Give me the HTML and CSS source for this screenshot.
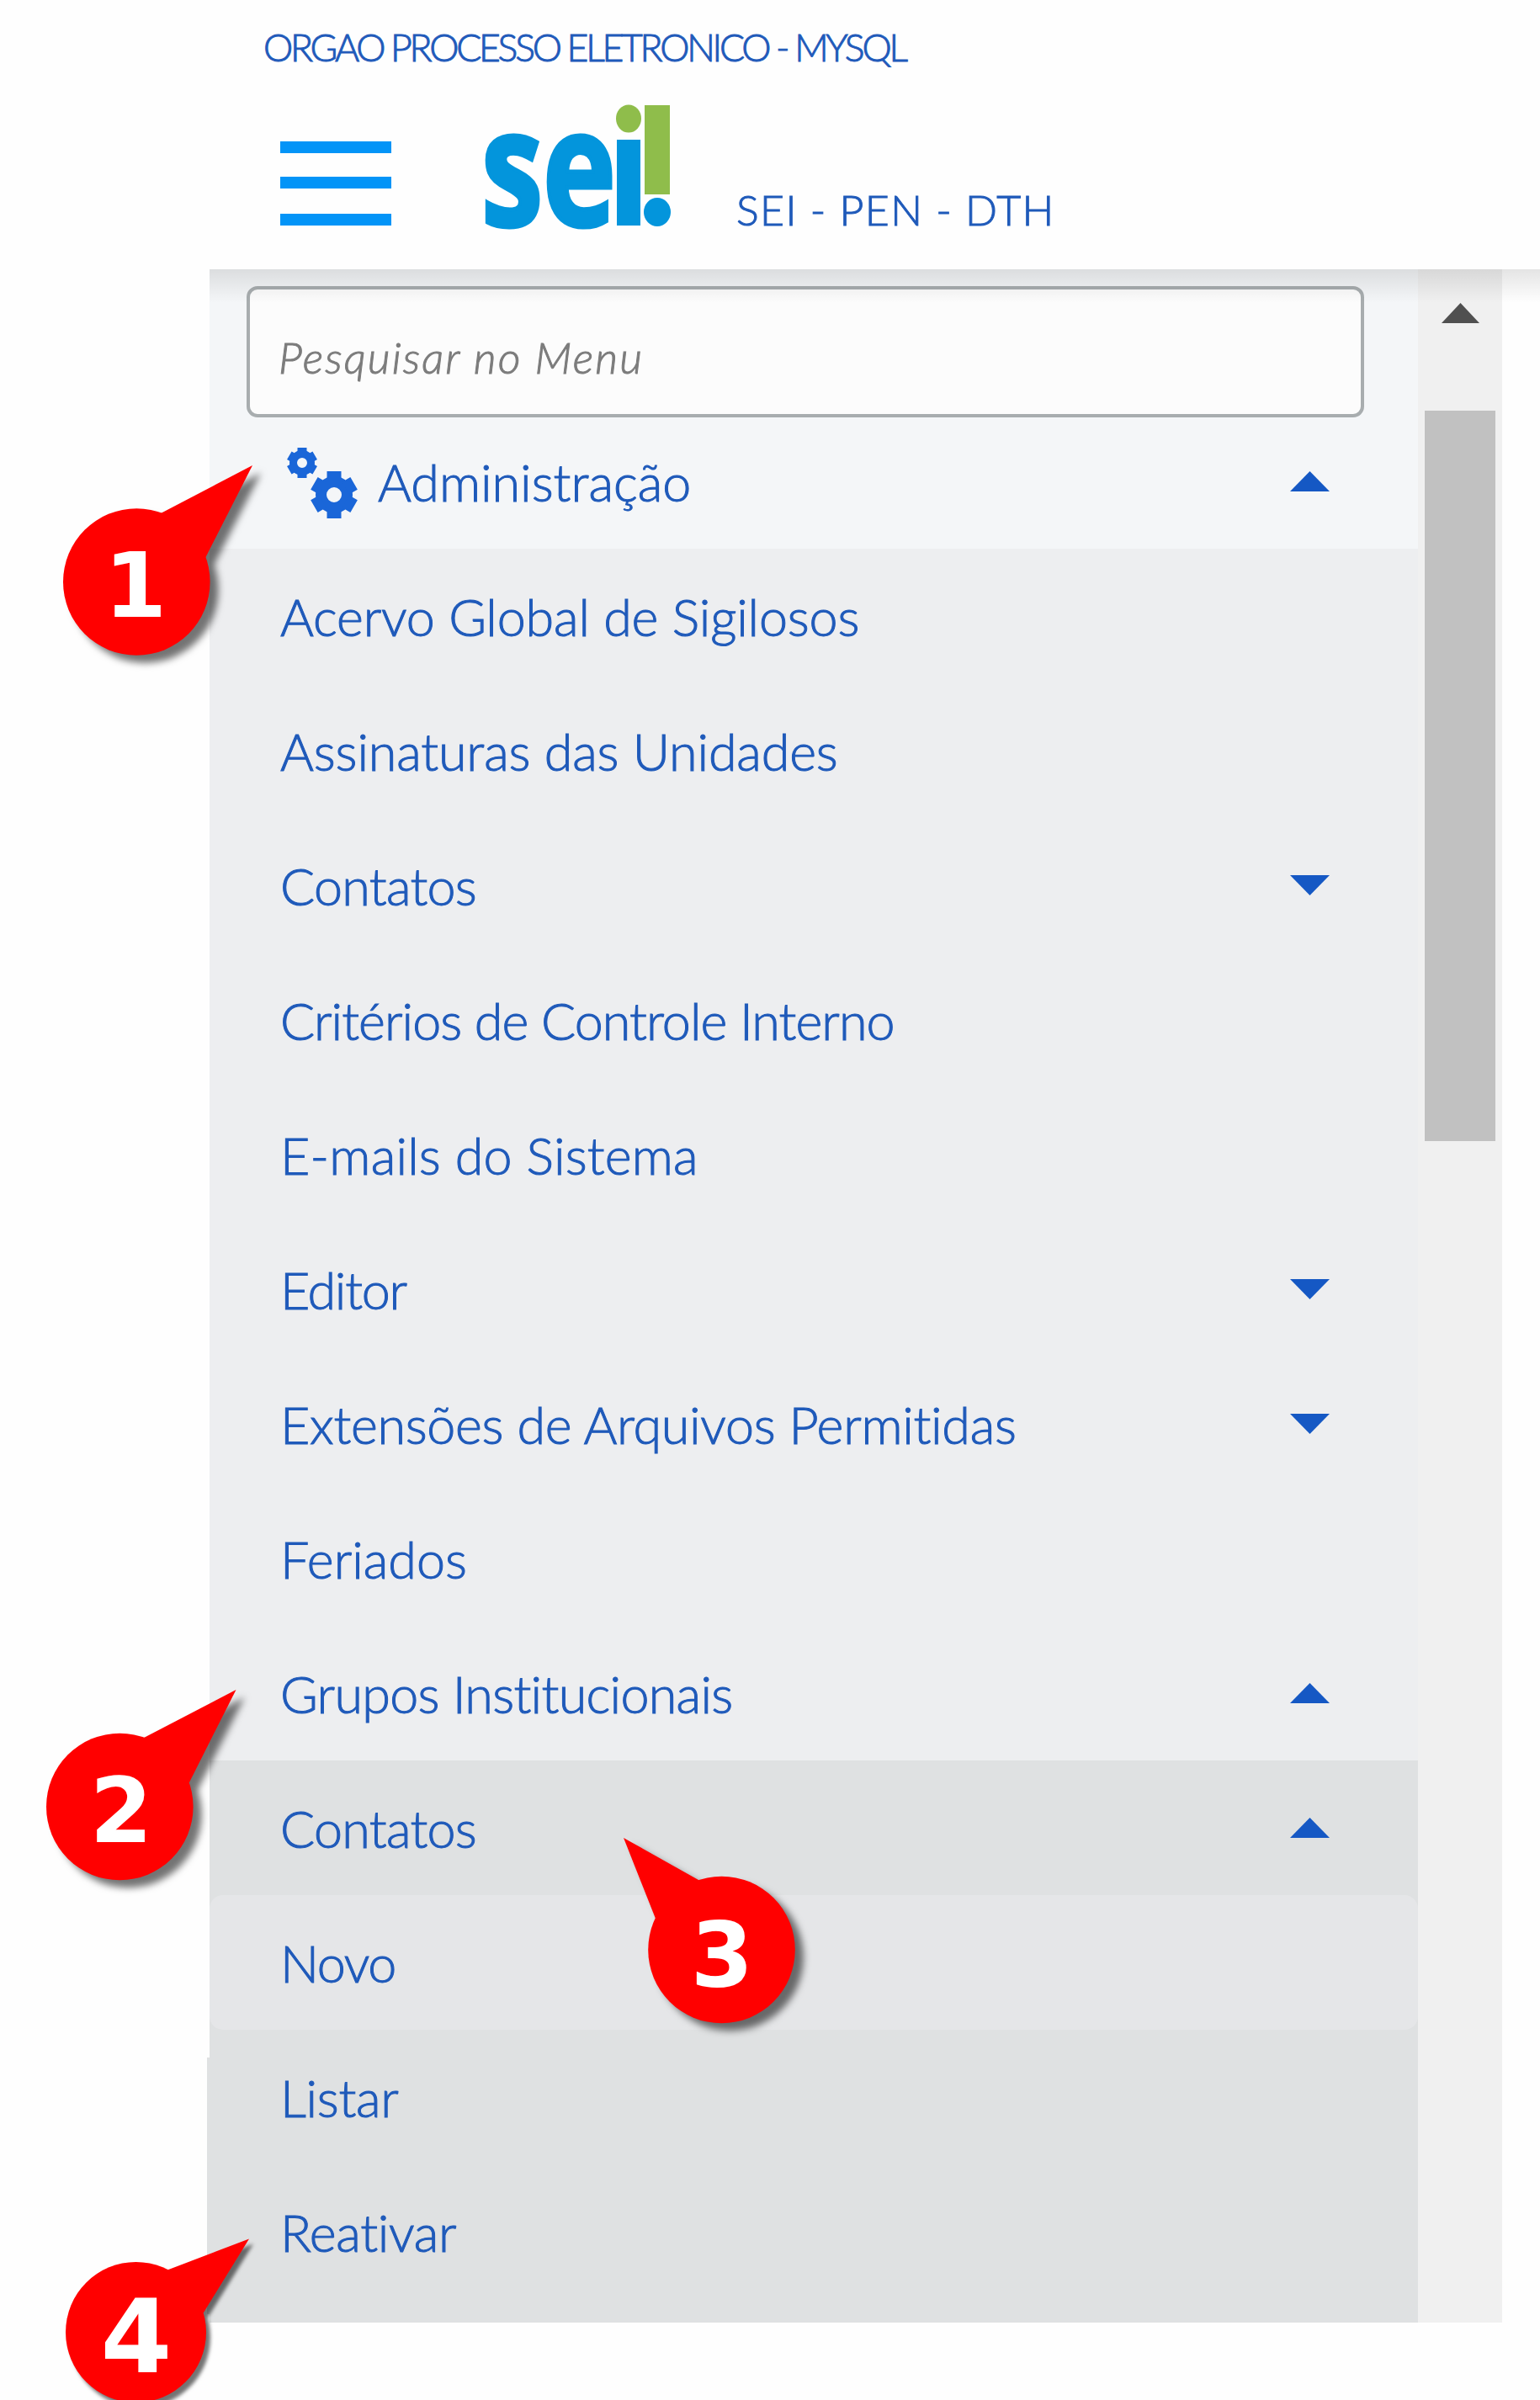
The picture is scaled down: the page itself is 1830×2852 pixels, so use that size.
FILE: index.html
```html
<!DOCTYPE html>
<html lang="pt-BR">
<head>
<meta charset="utf-8">
<title>SEI - PEN - DTH</title>
<link rel="stylesheet" href="styles.css">
</head>
<body>
<div class="page">
  <header class="topbar">
    <div class="org"><span class="t-org">ORGAO PROCESSO ELETRONICO - MYSQL</span></div>
    <div class="brand">
      <svg class="burger" width="132" height="104" viewBox="0 0 132 104" fill="#0394f7"><path d="M0 0h132v14H0zM0 42h132v14H0zM0 86h132v14H0z"/></svg>
      <svg class="logo" width="224" height="150" viewBox="0 0 224 150">
        <g fill="#0395dc">
          <text class="logo-text" x="-3" y="144" textLength="160" lengthAdjust="spacingAndGlyphs">se</text>
          <rect x="158" y="42" width="28" height="102"/>
          <ellipse cx="206" cy="128" rx="16" ry="17"/>
        </g>
        <g fill="#8fbd4b"><ellipse cx="172" cy="17" rx="15" ry="16.5"/><rect x="191" y="1" width="30" height="106"/></g>
      </svg>
      <span class="system"><span class="t-sys">SEI - PEN - DTH</span></span>
    </div>
  </header>

  <div class="body">
    <nav class="sidebar">
      <div class="head">
        <div class="search"><span class="t-search">Pesquisar no Menu</span></div>
        <div class="row row-admin">
          <svg class="gears" width="84" height="86" viewBox="0 0 84 86" fill="none" stroke="#1a66d8">
            <g transform="translate(18 18)"><circle r="10.5" stroke-width="9"/><path stroke-width="11" d="M0-11V-18M0 11V18M9.5-5.5 15.2-8.8M-9.5 5.5-15.2 8.8M9.5 5.5 15.2 8.8M-9.5-5.5-15.2-8.8"/></g>
            <g transform="translate(56 56)"><circle r="15.5" stroke-width="13"/><path stroke-width="17" d="M0-16V-28M0 16V28M13.9-8 23.6-13.6M-13.9 8-23.6 13.6M13.9 8 23.6 13.6M-13.9-8-23.6-13.6"/></g>
          </svg>
          <span class="label t-adm">Administração</span><i class="caret up"></i>
        </div>
      </div>
      <div class="level1">
        <div class="row"><span class="label t1">Acervo Global de Sigilosos</span></div>
        <div class="row"><span class="label t2">Assinaturas das Unidades</span></div>
        <div class="row"><span class="label t3">Contatos</span><i class="caret down"></i></div>
        <div class="row"><span class="label t4">Critérios de Controle Interno</span></div>
        <div class="row"><span class="label t5">E-mails do Sistema</span></div>
        <div class="row"><span class="label t6">Editor</span><i class="caret down"></i></div>
        <div class="row"><span class="label t7">Extensões de Arquivos Permitidas</span><i class="caret down"></i></div>
        <div class="row"><span class="label t8">Feriados</span></div>
        <div class="row"><span class="label t9">Grupos Institucionais</span><i class="caret up"></i></div>
      </div>
      <div class="level2">
        <div class="row"><span class="label t3">Contatos</span><i class="caret up"></i></div>
        <div class="row hover"><span class="label t10">Novo</span></div>
        <div class="row"><span class="label t11">Listar</span></div>
        <div class="row"><span class="label t12">Reativar</span></div>
      </div>
    </nav>
    <div class="scrollbar"><i class="scroll-up"></i><div class="thumb"></div></div>
  </div>

  <svg class="callouts" width="1830" height="2852" viewBox="0 0 1830 2852">
    <g class="pin" fill="#f00">
      <circle cx="162.3" cy="691.5" r="87.3"/><path d="M191 610 300 553 244 663 162 692z"/>
    </g>
    <g class="pin" fill="#f00">
      <circle cx="142.3" cy="2147" r="87.3"/><path d="M171 2065 280.500 2008 225 2118 142 2147z"/>
    </g>
    <g class="pin" fill="#f00">
      <circle cx="857.5" cy="2317" r="87.3"/><path d="M830 2234 741 2184 779 2280 857 2317z"/>
    </g>
    <g class="pin small" fill="#f00">
      <circle cx="161.500" cy="2771.500" r="83.500"/><path d="M199 2697.500 296 2660.500 242 2748 161 2771z"/>
    </g>
    <g class="num">
      <text x="161" y="733">1</text>
      <text x="144" y="2189">2</text>
      <text x="858" y="2360">3</text>
      <text class="num4" x="162" y="2819">4</text>
    </g>
  </svg>
</div>
</body>
</html>
```

FILE: styles.css
```css
* { box-sizing: border-box; }
body { margin: 0; background: #fefefe; font-family: Lato, "Open Sans", sans-serif; font-weight: 300; font-variant-ligatures: none; color: #1f5aba; }
.page { position: relative; width: 1830px; height: 2852px; overflow: hidden; }
.topbar { height: 320px; padding-left: 313px; }
.org { height: 112px; font-size: 44.500px; line-height: 112px; }
.brand { display: flex; align-items: flex-start; padding-left: 20px; }
.burger { margin-top: 56px; }
.logo { margin: 12px 0 0 110px; overflow: visible; }
.logo-text { font: 700 192px "Open Sans", sans-serif; stroke: #0395dc; stroke-width: 5px; }
.system { margin-left: 76px; height: 208px; font-size: 50px; line-height: 304px; margin-top: -15px; }
span { white-space: nowrap; -webkit-text-stroke: 1px currentColor; }

/* per-label tracking */
.t-org { letter-spacing: -3.230px; }
.t-sys { letter-spacing: 1.350px; }
.t-search { letter-spacing: 2.100px; }
.t1, .t2 { letter-spacing: -.150px; }
.t3, .t9 { letter-spacing: -.700px; }
.t4 { letter-spacing: -.950px; }
.t5 { letter-spacing: .200px; }
.t6, .t10 { letter-spacing: -1.300px; }
.t7, .t11, .t12 { letter-spacing: -.300px; }

.body { display: flex; height: 2440px; padding-left: 249px; position: relative; }
.body::before { content: ""; position: absolute; left: 249px; right: 0; top: 0; height: 40px;
  background: linear-gradient(rgba(0,0,0,.1), rgba(0,0,0,.055) 45%, rgba(0,0,0,0)); }
.sidebar { width: 1436px; }
.head { height: 332px; padding-top: 20px; background: #f4f6f8; }
.search { width: 1328px; height: 156px; margin-left: 44px; padding-left: 34px; border: 4px solid #a8adaf;
  border-radius: 13px; background: #fcfcfc; color: #7c7c7c; font-size: 52px; font-style: italic; line-height: 161px; }
.row { display: flex; align-items: flex-start; height: 160px; padding: 0 105px 0 84px; font-size: 61px; line-height: 162px; }
.row-admin { margin-top: -4px; padding-left: 92px; }
.gears { margin: 40px 24px 0 0; flex: none; }
.caret { width: 47px; height: 24px; margin: 68px 0 0 auto; background: #1558c4; }
.up { clip-path: polygon(50% 0, 100% 100%, 0 100%); }
.down { clip-path: polygon(0 0, 100% 0, 50% 100%); }
.level1 { background: #edeef0; }
.level2 { position: relative; height: 668px; background: #dfe1e2; }
.level2::before { content: ""; position: absolute; left: -3px; top: 353px; width: 3px; height: 305px; background: #dfe1e2; }
.hover { background: #e5e6e8; border-radius: 16px; }
.scrollbar { width: 100px; background: #f0f0f0; padding-top: 40px; }
.scroll-up { display: block; width: 45px; height: 24px; margin-left: 28px; background: #505050; clip-path: polygon(50% 0, 100% 100%, 0 100%); }
.thumb { width: 84px; height: 868px; margin: 104px 0 0 8px; background: #c1c1c1; }

.callouts { position: absolute; left: 0; top: 0; }
.pin { filter: drop-shadow(10px 9px 4px rgba(0,0,0,.55)); }
.small { filter: drop-shadow(5px 6px 2px rgba(0,0,0,.55)); }
.num { fill: #fff; font: 700 107px "DejaVu Sans", sans-serif; text-anchor: middle; }
.num4 { font-size: 122px; }
```
